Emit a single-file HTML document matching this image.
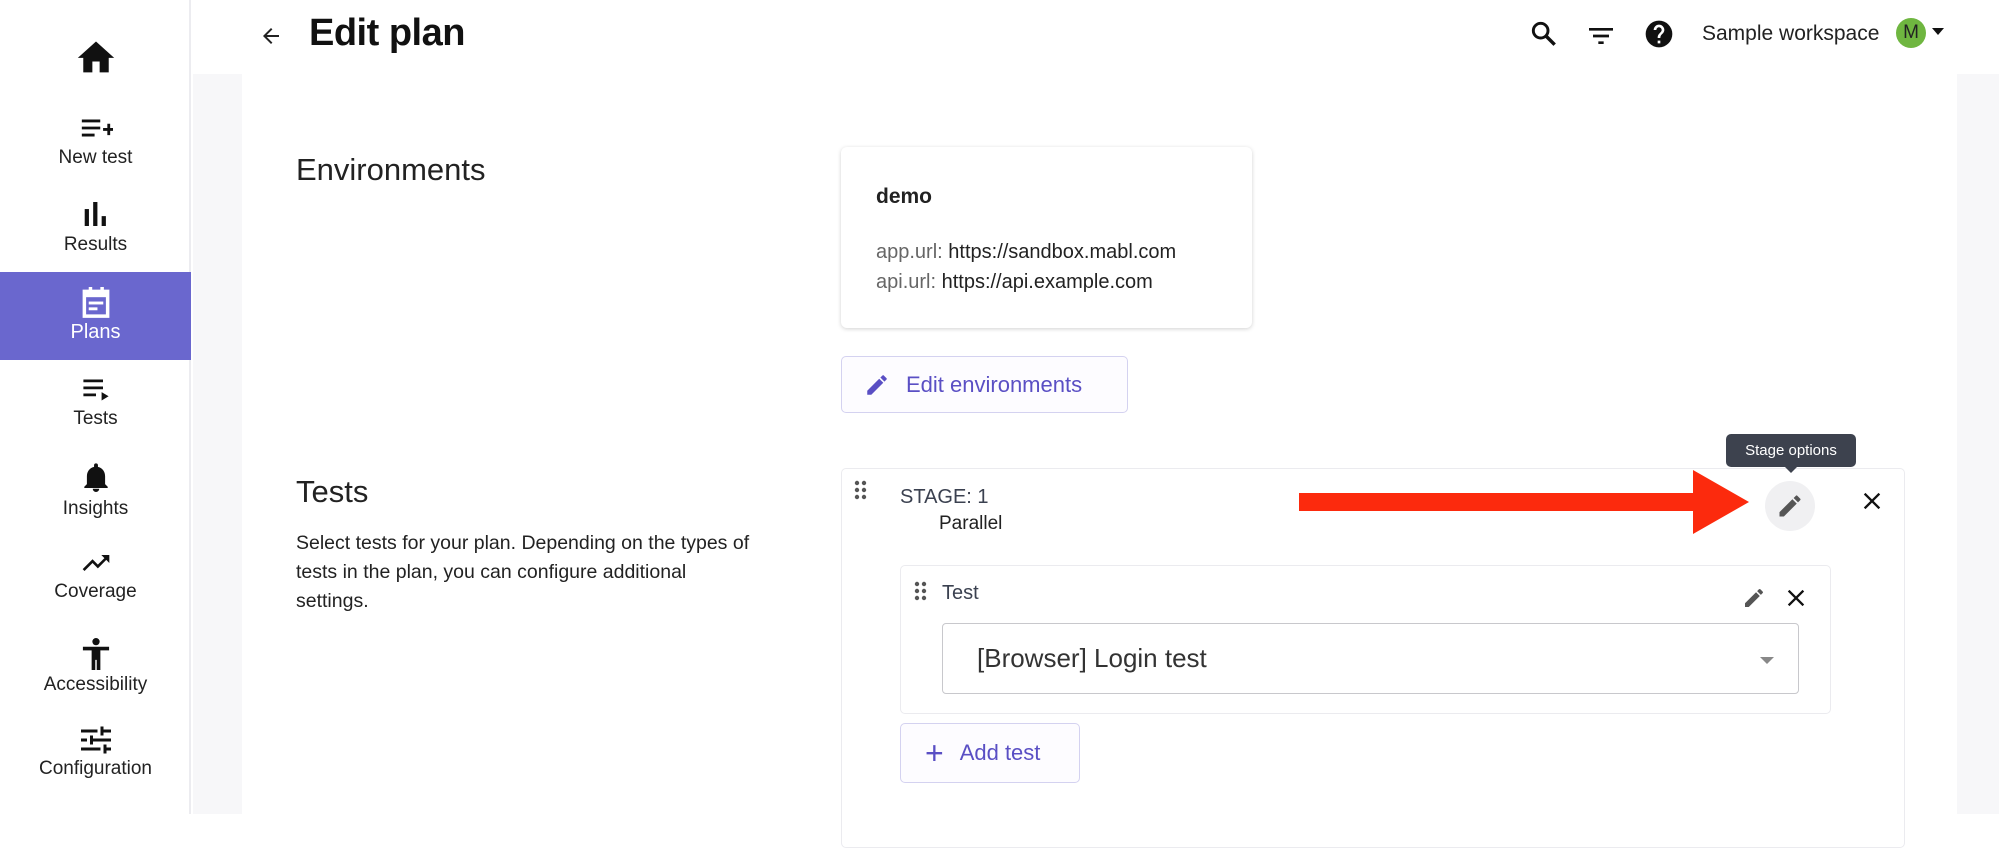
<!DOCTYPE html>
<html><head><meta charset="utf-8"><style>
*{box-sizing:border-box;margin:0;padding:0}
body{width:1999px;height:814px;overflow:hidden;background:#fff;font-family:"Liberation Sans",sans-serif;color:#222;position:relative}
.a{position:absolute}
.side{left:0;top:0;width:191px;height:814px;background:#fff;border-right:2px solid #ececf0}
.item{position:absolute;left:0;width:191px;text-align:center;font-size:19px;color:#222}
.item svg{display:block;margin:0 auto}
.gray{left:193px;top:74px;width:1806px;height:740px;background:#f7f7f9}
.card{left:242px;top:74px;width:1715px;height:740px;background:#fff}
.btn{border:1.5px solid #d4d2f0;border-radius:5px;background:#fdfcff;color:#5a4fc4;font-size:22px;display:flex;align-items:center}
</style></head><body>
<div class="a gray"></div>
<div class="a card"></div>
<div class="a side">
 <div class="item" style="top:36px"><svg width="44" height="40" viewBox="0 0 24 22"><path d="M10 20v-6h4v6h5v-8h3L12 3 2 12h3v8z" fill="#111"/></svg></div>
 <div class="item" style="top:115px"><svg width="34" height="26" viewBox="0 0 24 18"><path d="M2 3h13v2H2zM2 8h13v2H2zM2 13h9v2H2zM17 9h3v-3h2v3h3v2h-3v3h-2v-3h-3z" fill="#111"/></svg><div style="margin-top:6px">New test</div></div>
 <div class="item" style="top:202px"><svg width="26" height="24" viewBox="0 0 18 17"><rect x="1" y="5" width="3" height="12" fill="#111"/><rect x="7" y="0" width="3" height="17" fill="#111"/><rect x="13" y="10" width="3" height="7" fill="#111"/></svg><div style="margin-top:8px">Results</div></div>
 <div class="item" style="top:272px;height:88px;background:#6a67ce;color:#fff;padding-top:15px"><svg width="30" height="32" viewBox="0 0 20 22"><path d="M2 3h16v17H2z" fill="none" stroke="#fff" stroke-width="2.4"/><rect x="2" y="3" width="16" height="4" fill="#fff"/><rect x="5" y="0" width="2.4" height="4" fill="#fff"/><rect x="13" y="0" width="2.4" height="4" fill="#fff"/><rect x="5" y="10" width="10" height="2" fill="#fff"/><rect x="5" y="14" width="6" height="2" fill="#fff"/></svg><div style="margin-top:2px;font-size:20px">Plans</div></div>
 <div class="item" style="top:378px"><svg width="28" height="24" viewBox="0 0 20 17"><path d="M1 1h14v2H1zM1 6h14v2H1zM1 11h9v2H1zM14 10l5 3-5 3z" fill="#111"/></svg><div style="margin-top:6px">Tests</div></div>
 <div class="item" style="top:462px"><svg width="26" height="30" viewBox="0 0 20 23"><path d="M10 23a2.5 2.5 0 002.5-2.5h-5A2.5 2.5 0 0010 23zM17 17v-6c0-3.6-2-6.5-5.5-7.3V2.5a1.5 1.5 0 00-3 0v1.2C5 4.5 3 7.4 3 11v6l-2 2v1h18v-1z" fill="#111"/></svg><div style="margin-top:6px">Insights</div></div>
 <div class="item" style="top:555px"><svg width="32" height="20" viewBox="0 0 24 15"><path d="M16 0l2.3 2.3-4.9 4.9-4-4L2 10.6 3.4 12l6-6 4 4 6.3-6.3L22 6V0z" fill="#111"/></svg><div style="margin-top:6px">Coverage</div></div>
 <div class="item" style="top:638px"><svg width="30" height="32" viewBox="0 0 20 22"><circle cx="10" cy="2.5" r="2.5" fill="#111"/><path d="M1 6h18v2.5h-6V22h-2.5v-7h-1v7H7V8.5H1z" fill="#111"/></svg><div style="margin-top:4px">Accessibility</div></div>
 <div class="item" style="top:726px"><svg width="30" height="28" viewBox="0 0 20 18"><path d="M0 2h11v2H0zM13 0h2v6h-2zM15 2h5v2h-5zM0 8h4v2H0zM6 6h2v6H6zM8 8h12v2H8zM0 14h13v2H0zM15 12h2v6h-2zM17 14h3v2h-3z" fill="#111"/></svg><div style="margin-top:4px">Configuration</div></div>
</div>
<!-- header -->
<svg class="a" style="left:258px;top:24px" width="26" height="24" viewBox="0 0 24 24"><path d="M20 11H7.8l5.6-5.6L12 4l-8 8 8 8 1.4-1.4L7.8 13H20z" fill="#222"/></svg>
<div class="a" style="left:309px;top:12px;font-size:38px;font-weight:bold;color:#111;letter-spacing:-0.5px">Edit plan</div>
<svg class="a" style="left:1528px;top:18px" width="32" height="32" viewBox="0 0 24 24"><circle cx="9.5" cy="9.5" r="5.5" fill="none" stroke="#111" stroke-width="2.2"/><path d="M13.5 13.5L20 20" stroke="#111" stroke-width="2.6"/></svg>
<svg class="a" style="left:1585px;top:20px" width="32" height="32" viewBox="0 0 24 24"><path d="M3 6h18v2H3zM6 11h12v2H6zM10 16h4v2h-4z" fill="#111"/></svg>
<svg class="a" style="left:1643px;top:18px" width="32" height="32" viewBox="0 0 24 24"><path d="M12 2a10 10 0 100 20 10 10 0 000-20zm1 17h-2v-2h2zm2.1-7.7l-.9.9C13.5 12.9 13 13.5 13 15h-2v-.5c0-1.1.5-2.1 1.2-2.8l1.2-1.3A2 2 0 1010 9H8a4 4 0 118 0c0 .9-.4 1.7-.9 2.3z" fill="#111"/></svg>
<div class="a" style="left:1702px;top:22px;font-size:21px;color:#222">Sample workspace</div>
<div class="a" style="left:1896px;top:18px;width:30px;height:30px;border-radius:50%;background:#6fb640;color:#222;font-size:19px;text-align:center;line-height:30px">M</div>
<div class="a" style="left:1932px;top:28px;width:0;height:0;border-left:6px solid transparent;border-right:6px solid transparent;border-top:7px solid #111"></div>
<!-- environments -->
<div class="a" style="left:296px;top:152px;font-size:31px;color:#222">Environments</div>
<div class="a" style="left:841px;top:147px;width:411px;height:181px;border-radius:6px;box-shadow:0 1px 4px rgba(0,0,0,.18);background:#fff"></div>
<div class="a" style="left:876px;top:185px;font-size:21px;font-weight:bold">demo</div>
<div class="a" style="left:876px;top:237px;font-size:20px;line-height:30px;color:#222"><span style="color:#666">app.url:</span> https://sandbox.mabl.com<br><span style="color:#666">api.url:</span> https://api.example.com</div>
<div class="a btn" style="left:841px;top:356px;width:287px;height:57px;padding-left:22px"><svg width="26" height="26" viewBox="0 0 24 24"><path d="M3 17.25V21h3.75L17.8 9.94l-3.75-3.75zM20.7 7.04a1 1 0 000-1.41l-2.34-2.34a1 1 0 00-1.41 0l-1.83 1.83 3.75 3.75z" fill="#5a4fc4"/></svg><span style="margin-left:16px">Edit environments</span></div>
<!-- tests -->
<div class="a" style="left:296px;top:474px;font-size:31px;color:#222">Tests</div>
<div class="a" style="left:296px;top:529px;font-size:19.5px;line-height:29px;color:#222;white-space:nowrap">Select tests for your plan. Depending on the types of<br>tests in the plan, you can configure additional<br>settings.</div>
<div class="a" style="left:841px;top:468px;width:1064px;height:380px;border:1.5px solid #ebebef;border-radius:5px;background:#fff"></div>
<svg class="a" style="left:854px;top:480px" width="14" height="22"><g fill="#555"><circle cx="3" cy="3" r="2.2"/><circle cx="10" cy="3" r="2.2"/><circle cx="3" cy="10" r="2.2"/><circle cx="10" cy="10" r="2.2"/><circle cx="3" cy="17" r="2.2"/><circle cx="10" cy="17" r="2.2"/></g></svg>
<div class="a" style="left:900px;top:486px;font-size:20px;color:#3b4150">STAGE: 1</div>
<div class="a" style="left:939px;top:513px;font-size:19px;color:#222">Parallel</div>
<div class="a" style="left:1726px;top:434px;width:130px;height:33px;background:#3d424e;border-radius:5px;color:#fff;font-size:15px;text-align:center;line-height:33px">Stage options</div>
<div class="a" style="left:1784px;top:466px;width:0;height:0;border-left:7px solid transparent;border-right:7px solid transparent;border-top:7px solid #3d424e"></div>
<div class="a" style="left:1765px;top:481px;width:50px;height:50px;border-radius:50%;background:#f0f0f2"></div>
<svg class="a" style="left:1776px;top:492px" width="28" height="28" viewBox="0 0 24 24"><path d="M3 17.25V21h3.75L17.8 9.94l-3.75-3.75zM20.7 7.04a1 1 0 000-1.41l-2.34-2.34a1 1 0 00-1.41 0l-1.83 1.83 3.75 3.75z" fill="#555"/></svg>
<svg class="a" style="left:1858px;top:487px" width="28" height="28" viewBox="0 0 24 24"><path d="M19 6.4L17.6 5 12 10.6 6.4 5 5 6.4 10.6 12 5 17.6 6.4 19 12 13.4 17.6 19 19 17.6 13.4 12z" fill="#111"/></svg>
<svg class="a" style="left:1296px;top:470px" width="456" height="64"><path d="M3 23h394V0l56 32-56 32V41H3z" fill="#fc2a0d"/></svg>
<div class="a" style="left:900px;top:565px;width:931px;height:149px;border:1.5px solid #ebebef;border-radius:5px;background:#fff"></div>
<svg class="a" style="left:914px;top:581px" width="14" height="22"><g fill="#555"><circle cx="3" cy="3" r="2.2"/><circle cx="10" cy="3" r="2.2"/><circle cx="3" cy="10" r="2.2"/><circle cx="10" cy="10" r="2.2"/><circle cx="3" cy="17" r="2.2"/><circle cx="10" cy="17" r="2.2"/></g></svg>
<div class="a" style="left:942px;top:582px;font-size:20px;color:#3b4150">Test</div>
<svg class="a" style="left:1742px;top:586px" width="24" height="24" viewBox="0 0 24 24"><path d="M3 17.25V21h3.75L17.8 9.94l-3.75-3.75zM20.7 7.04a1 1 0 000-1.41l-2.34-2.34a1 1 0 00-1.41 0l-1.83 1.83 3.75 3.75z" fill="#555"/></svg>
<svg class="a" style="left:1782px;top:584px" width="28" height="28" viewBox="0 0 24 24"><path d="M19 6.4L17.6 5 12 10.6 6.4 5 5 6.4 10.6 12 5 17.6 6.4 19 12 13.4 17.6 19 19 17.6 13.4 12z" fill="#111"/></svg>
<div class="a" style="left:942px;top:623px;width:857px;height:71px;border:1.5px solid #c8c8cc;border-radius:4px;background:#fff"></div>
<div class="a" style="left:977px;top:643px;font-size:26px;color:#333">[Browser] Login test</div>
<div class="a" style="left:1760px;top:657px;width:0;height:0;border-left:7px solid transparent;border-right:7px solid transparent;border-top:7px solid #888"></div>
<div class="a btn" style="left:900px;top:723px;width:180px;height:60px;padding-left:24px"><span style="font-size:32px;font-weight:300;line-height:1">+</span><span style="margin-left:16px">Add test</span></div>
</body></html>
